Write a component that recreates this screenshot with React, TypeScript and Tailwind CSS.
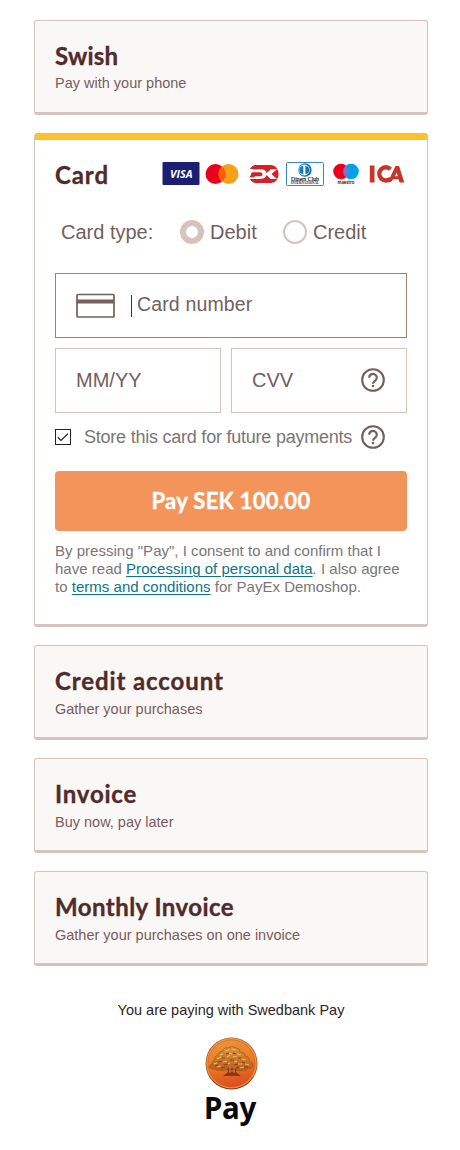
import React from "react";

const heading = "font-['Lato',sans-serif] font-bold text-[24px] leading-[28px] text-[#512b2b] whitespace-nowrap [-webkit-text-stroke:0.35px_#512b2b]";

function Method({ title, sub, track, gap }: { title: string; sub: string; track: string; gap: string }) {
  return (
    <section className="h-[95px] rounded-[3px] border border-b-[3px] border-[#d4c4bc] bg-[#f9f8f6] px-5 pt-[21px]">
      <h2 className={`${heading} ${track}`}>{title}</h2>
      <p className={`${gap} text-[14.5px] leading-[18px] text-[#7a5c5c]`}>{sub}</p>
    </section>
  );
}

function Help() {
  return (
    <svg width="24" height="24" viewBox="0 0 24 24" fill="none" stroke="#72605e" strokeWidth="2">
      <circle cx="12" cy="12" r="10.8" strokeWidth="2.1" />
      <path d="M8.200 9.800a3.800 3.800 0 1 1 6.300 2.700c-1.300 1.100-2.500 1.500-2.500 3.300" strokeWidth="2.200" />
      <path d="M12 16.900v2.300" strokeWidth="2.400" />
    </svg>
  );
}

function CardBrands() {
  return (
    <svg width="244" height="26" viewBox="0 0 244 26">
      <rect x="0.5" y="1" width="37" height="23" rx="1" fill="#1a1f71" />
      <text x="8" y="16.500" fontSize="10.5" fontWeight="700" fontStyle="italic" fill="#fff" textLength="22.500" lengthAdjust="spacingAndGlyphs" fontFamily="Open Sans, sans-serif">VISA</text>
      <circle cx="53.5" cy="13" r="10" fill="#eb001b" />
      <circle cx="66.5" cy="13" r="10" fill="#f79e1b" />
      <path d="M60 5.4a10 10 0 0 1 0 15.2a10 10 0 0 1 0-15.2z" fill="#ff5f00" />
      <path d="M94 4h14.500c5 0 8 4 8 9s-3 9-8 9H94c-2.600 0-4.600-1.500-6-4h4v-10h-4c1.400-2.500 3.400-4 6-4z" fill="#d81e27" />
      <path d="M84 8.300h14c4.200 0 6 1.500 6.600 3.600l4-3.600h6.400l-5.600 4.700 5.600 4.900h-6.400l-4-3.800c-.6 2.200-2.400 3.800-6.600 3.800H84z" fill="#fff" />
      <path d="M86.500 16.200c2.500-.2 2-3 3.500-5h8q2.500 0 2.500 2t-2.500 2h-5l-1 1z" fill="#d81e27" />
      <rect x="124.500" y="1.500" width="37" height="23" rx="1.200" fill="#fff" stroke="#3888bd" strokeWidth="1" />
      <circle cx="143" cy="9" r="6.700" fill="#1679b8" />
      <circle cx="142.300" cy="9" r="5.400" fill="#fff" />
      <path d="M141.300 5a4 4 0 0 0 0 8zM143.300 5a4 4 0 0 1 0 8z" fill="#1679b8" />
      <text x="129" y="19.700" fontSize="6.500" textLength="28" lengthAdjust="spacingAndGlyphs" fill="#222" stroke="#222" strokeWidth="0.200" fontFamily="Liberation Serif, serif">Diners Club</text>
      <text x="129" y="23.400" fontSize="3.700" fontWeight="700" textLength="28" lengthAdjust="spacingAndGlyphs" fill="#222" fontFamily="Liberation Serif, serif">INTERNATIONAL</text>
      <circle cx="179" cy="10.500" r="7.800" fill="#eb001b" />
      <circle cx="189" cy="10.500" r="7.800" fill="#00a2e5" />
      <path d="M184 4.500a7.800 7.800 0 0 1 0 12a7.800 7.800 0 0 1 0-12z" fill="#7375cf" />
      <text x="175.500" y="23.200" fontSize="5.500" fontWeight="700" textLength="17" lengthAdjust="spacingAndGlyphs" fill="#222" fontFamily="Lato, sans-serif">maestro</text>
      <path d="M207.800 4.500h4.700v17h-4.700z" fill="#c5352c" />
      <path d="M228.500 8.200a6.600 6.600 0 1 0 .2 9.200" fill="none" stroke="#c5352c" strokeWidth="4.400" />
      <path d="M226.500 19.800L233.500 5h3.600l5.200 16.500h-4.700l-1-3.200h-5.400l-2.400 3zM233 15.200h2.700l-1-3.800z" fill="#c5352c" fillRule="evenodd" />
    </svg>
  );
}

function TreeSeal() {
  return (
    <svg width="53" height="53" viewBox="0 0 53 53">
      <defs>
        <linearGradient id="coin" x1="0.3" y1="0" x2="0.5" y2="1">
          <stop offset="0" stopColor="#e8963c" />
          <stop offset="0.5" stopColor="#ec7a20" />
          <stop offset="1" stopColor="#dd4c22" />
        </linearGradient>
        <linearGradient id="rim" x1="0.5" y1="0" x2="0.5" y2="1">
          <stop offset="0" stopColor="#a35a1c" />
          <stop offset="0.6" stopColor="#b95a20" />
          <stop offset="1" stopColor="#7d2c17" />
        </linearGradient>
        <linearGradient id="leaf" x1="0.5" y1="0" x2="0.5" y2="1">
          <stop offset="0" stopColor="#dc9440" />
          <stop offset="1" stopColor="#b85a1a" />
        </linearGradient>
      </defs>
      <circle cx="26.500" cy="26.500" r="26" fill="url(#rim)" />
      <circle cx="26.500" cy="26.300" r="25.200" fill="#f0964a" />
      <circle cx="26.500" cy="26.500" r="23.600" fill="url(#coin)" stroke="#c76020" strokeWidth="0.600" />
      <path d="M21.500 30l1.500 5-5 4h18l-5-4 1.500-5z" fill="#87391b" />
      <path d="M5 30q-1-2 2-3-1-3 3-4-1-4 3-5 1-4 5-4 1-4 5-3 4-3 8 0 4 0 4 4 5 0 5 4 5 1 4 5 5 2 4 6-2 2-4 1-2 3-6 2-3 2-6 0l-2-2h-7l-2 2q-3 2-6 0-3 1-5-1-4 1-6-2z" fill="url(#leaf)" stroke="#a5561d" strokeWidth="0.700" />
      <path d="M9 27l3-1M12 22l4-2M15 18l3-1M20 14l4-1M27 12l4 1M32 17l4 1M37 22l4 1M40 27l4 1M28 20l4-1M22 20l3-2M18 25l4-1M29 25l3-1M12 30l4-1M35 31l4-1M24 16l3 1M33 27l4 0M23 27l2-1" fill="none" stroke="#f0b56c" strokeWidth="1.200" />
      <path d="M10 29l3-1M13 25l4-1M17 21l3 0M21 17l3-1M28 16l3 1M33 21l3 0M37 25l3 1M39 30l4 0M25 23l4 0M19 28l4-1M29 28l4-1M16 31l4-1M31 31l3-1" fill="none" stroke="#88441a" strokeWidth="1.200" />
      <path d="M25 29v7M29 29v7M24 34h6" stroke="#df8440" strokeWidth="0.900" />
    </svg>
  );
}

export default function App() {
  return (
    <main className="min-h-[1150px] w-[460px] bg-white pl-[34px] pr-8 pt-5 font-['Liberation_Sans',Arial,sans-serif]">
      <div className="flex flex-col gap-[18px]">
        <Method title="Swish" sub="Pay with your phone" track="tracking-[0.2px]" gap="mt-[4px]" />

        <section className="h-[494px] overflow-hidden rounded-[3px] border-x border-b-[3px] border-[#d4c4bc] bg-white">
          <div className="-mx-px h-[7px] bg-[#fdc129]" />
          <div className="px-5">
            <header className="flex h-[68px] items-center justify-between pt-[2px]">
              <h2 className={`${heading} tracking-[0.9px]`}>Card</h2>
              <div className="-mt-[3px] mr-[1px]"><CardBrands /></div>
            </header>

            <div className="flex h-[48px] items-center pl-[6px] text-[20px] leading-6 text-[#72605e]">
              <span className="w-[119px]">Card type:</span>
              <span className="size-6 rounded-full border-[6px] border-[#d4c4bc]" />
              <span className="ml-[6px] w-[73px]">Debit</span>
              <span className="size-6 rounded-full border-2 border-[#d4c4bc]" />
              <span className="ml-[6px]">Credit</span>
            </div>

            <div className="mt-[17px] flex h-[65px] items-center border border-[#9f8276] pl-5 text-[#72605e]">
              <svg width="39" height="25" viewBox="0 0 39 25" fill="none">
                <rect x="1" y="1.500" width="37" height="22.500" rx="1" stroke="#72605e" strokeWidth="1.700" />
                <path d="M1 8.500h37" stroke="#72605e" strokeWidth="4" />
              </svg>
              <span className="ml-4 h-[22px] w-px bg-[#512b2b]" />
              <span className="-mt-[4px] ml-[5px] text-[19.500px] leading-6 tracking-[0.15px]">Card number</span>
            </div>

            <div className="mt-[10px] flex gap-[10px] text-[20px] text-[#72605e]">
              <div className="flex h-[65px] w-[166px] items-center border border-[#d4c4bc] pb-[2px] pl-5">MM/YY</div>
              <div className="flex h-[65px] flex-1 items-center justify-between border border-[#d4c4bc] pb-[2px] pl-5 pr-[21px]">
                <span>CVV</span><Help />
              </div>
            </div>

            <div className="mt-3 flex h-6 items-center text-[18px] text-[#7a7675]">
              <svg width="16" height="16" viewBox="0 0 16 16" fill="none" stroke="#222">
                <rect x="0.500" y="0.500" width="15" height="15" />
                <path d="M2.800 8.200l3.200 3.200 7-6.800" strokeWidth="1.300" />
              </svg>
              <span className="ml-[13px] w-[277px] whitespace-nowrap tracking-[-0.23px]">Store this card for future payments</span>
              <Help />
            </div>

            <button className="mt-[22px] block h-[60px] w-full rounded-[4px] bg-[#f3955b] pb-[2px] font-['Lato',sans-serif] text-[22px] font-bold tracking-[0.3px] text-white [-webkit-text-stroke:0.4px_white]">
              Pay SEK 100.00
            </button>
            <p className="mt-[11px] whitespace-nowrap text-[15px] leading-[18px] tracking-[0.02px] text-[#7a7675]">
              By pressing "Pay", I consent to and confirm that I<br />
              have read <a className="text-[#0b7587] underline decoration-1 underline-offset-2">Processing of personal data</a>. I also agree<br />
              to <a className="text-[#0b7587] underline decoration-1 underline-offset-2">terms and conditions</a> for PayEx Demoshop.
            </p>
          </div>
        </section>

        <Method title="Credit account" sub="Gather your purchases" track="tracking-[0.9px]" gap="mt-[5px]" />
        <Method title="Invoice" sub="Buy now, pay later" track="tracking-[0.8px]" gap="mt-[5px]" />
        <Method title="Monthly Invoice" sub="Gather your purchases on one invoice" track="tracking-[0.45px]" gap="mt-[5px]" />
      </div>

      <footer className="mt-[35px] flex flex-col items-center text-[#2f2424]">
        <p className="text-[14.500px] leading-[18px]">You are paying with Swedbank Pay</p>
        <div className="mt-[18px]"><TreeSeal /></div>
        <span className="mr-[2px] mt-[-4px] font-['Noto_Sans',sans-serif] text-[29.500px] font-bold leading-[44px] tracking-[-0.3px] text-[#090909]">Pay</span>
      </footer>
    </main>
  );
}
